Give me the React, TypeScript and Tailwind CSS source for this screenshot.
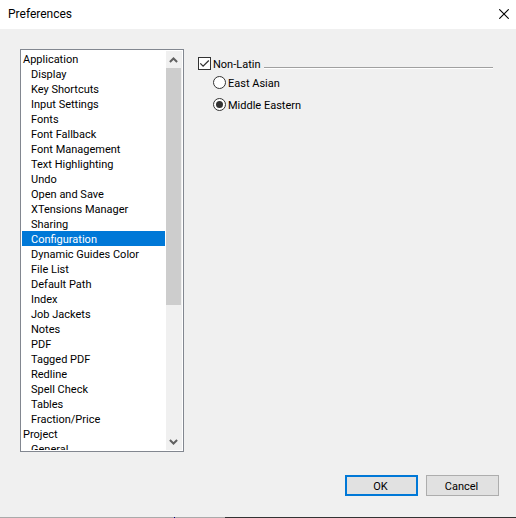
import { useState } from "react";
import clsx from "clsx";

interface Section {
  title: string;
  items: string[];
}

const SECTIONS: Section[] = [
  {
    title: "Application",
    items: [
      "Display",
      "Key Shortcuts",
      "Input Settings",
      "Fonts",
      "Font Fallback",
      "Font Management",
      "Text Highlighting",
      "Undo",
      "Open and Save",
      "XTensions Manager",
      "Sharing",
      "Configuration",
      "Dynamic Guides Color",
      "File List",
      "Default Path",
      "Index",
      "Job Jackets",
      "Notes",
      "PDF",
      "Tagged PDF",
      "Redline",
      "Spell Check",
      "Tables",
      "Fraction/Price",
    ],
  },
  { title: "Project", items: ["General"] },
];

function TitleBar() {
  return (
    <header className="flex h-[29px] items-center justify-between bg-white pr-[7px] pb-[2px] pl-2">
      <h1 className="text-[12px] leading-4 text-black">Preferences</h1>
      <button type="button" aria-label="Close">
        <svg width="10" height="10" viewBox="0 0 10 10" className="block">
          <path d="M0.3 0.3L9.7 9.7M9.7 0.3L0.3 9.7" stroke="#000" strokeWidth="1.1" />
        </svg>
      </button>
    </header>
  );
}

function ScrollArrow({ down }: { down?: boolean }) {
  return (
    <button
      type="button"
      aria-label={down ? "Scroll down" : "Scroll up"}
      className="flex h-[17px] w-full shrink-0 items-center justify-center pr-px"
    >
      <svg width="9" height="6" viewBox="0 0 9 6" className={clsx("block", down && "rotate-180")}>
        <path d="M0.9 5L4.5 1.5L8.1 5" fill="none" stroke="#606060" strokeWidth="2" />
      </svg>
    </button>
  );
}

function SectionList() {
  const [selected, setSelected] = useState("Configuration");

  return (
    <nav
      aria-label="Sections"
      className="flex h-[403px] w-[164px] shrink-0 border border-[#828790] bg-white p-px"
    >
      <div className="min-w-0 flex-1 overflow-hidden">
        {SECTIONS.map((section) => (
          <section key={section.title}>
            <h2 className="pt-[2px] pl-px leading-[13px]">{section.title}</h2>
            <ul>
              {section.items.map((item) => (
                <li key={item}>
                  <button
                    type="button"
                    onClick={() => setSelected(item)}
                    className={clsx(
                      "block w-full pt-[2px] pl-[9px] text-left leading-[13px] whitespace-nowrap",
                      item === selected && "bg-[#0078d7] text-white",
                    )}
                  >
                    {item}
                  </button>
                </li>
              ))}
            </ul>
          </section>
        ))}
      </div>
      <div className="ml-px flex w-4 shrink-0 flex-col bg-[#f0f0f0]">
        <ScrollArrow />
        <div className="flex-1 pr-px">
          <div className="h-[237px] bg-[#cdcdcd]" />
        </div>
        <ScrollArrow down />
      </div>
    </nav>
  );
}

interface ScriptRadioProps {
  label: string;
  checked: boolean;
  onSelect: () => void;
}

function ScriptRadio({ label, checked, onSelect }: ScriptRadioProps) {
  return (
    <label className="flex h-[15px] items-center gap-[2px]">
      <span className="grid size-[13px] place-items-center">
        <input
          type="radio"
          name="script"
          checked={checked}
          onChange={onSelect}
          className="col-start-1 row-start-1 size-[13px] appearance-none rounded-full border border-[#333] bg-white"
        />
        {checked && (
          <span className="pointer-events-none z-10 col-start-1 row-start-1 size-[7px] rounded-full bg-[#333]" />
        )}
      </span>
      <span className="pt-[2px] leading-[13px]">{label}</span>
    </label>
  );
}

function ConfigurationPanel() {
  const [nonLatin, setNonLatin] = useState(true);
  const [script, setScript] = useState("Middle Eastern");

  return (
    <main className="min-w-0 flex-1 pt-[7px]">
      <div className="flex items-start">
        <label className="flex h-[15px] items-center gap-[2px]">
          <span className="grid size-[13px] place-items-center">
            <input
              type="checkbox"
              checked={nonLatin}
              onChange={(e) => setNonLatin(e.target.checked)}
              className="col-start-1 row-start-1 size-[13px] appearance-none border border-[#333] bg-white"
            />
            {nonLatin && (
              <svg
                width="11"
                height="11"
                viewBox="0 0 11 11"
                className="pointer-events-none z-10 col-start-1 row-start-1"
              >
                <path d="M1.3 5.4L4.1 8.2L9.8 2.5" fill="none" stroke="#333" strokeWidth="1.3" />
              </svg>
            )}
          </span>
          <span className="pt-[2px] leading-[13px]">Non-Latin</span>
        </label>
        <div className="mt-[11px] ml-[3px] h-[2px] flex-1 border-t border-b border-t-[#a0a0a0] border-b-white" />
      </div>
      <div className="mt-1 flex flex-col gap-[7px] pl-[15px]">
        {["East Asian", "Middle Eastern"].map((name) => (
          <ScriptRadio
            key={name}
            label={name}
            checked={script === name}
            onSelect={() => setScript(name)}
          />
        ))}
      </div>
    </main>
  );
}

export default function App() {
  return (
    <div className="flex min-h-screen flex-col bg-[#f0f0f0] font-[Roboto,sans-serif] text-[11px] text-black">
      <TitleBar />
      <div className="flex gap-[14px] pt-5 pr-[23px] pl-5">
        <SectionList />
        <ConfigurationPanel />
      </div>
      <footer className="mt-[23px] flex justify-end gap-2 pr-[17px]">
        <button
          type="button"
          className="h-[21px] w-[73px] border-2 border-[#0078d7] bg-[#e1e1e1] pt-[2px] pr-[2px] leading-[15px]"
        >
          OK
        </button>
        <button
          type="button"
          className="h-[21px] w-[73px] border border-[#adadad] bg-[#e1e1e1] pt-[2px] pr-[2px] leading-[17px]"
        >
          Cancel
        </button>
      </footer>
      <div className="mt-auto flex h-px">
        <div className="w-[174px] bg-[#aaaaaa]" />
        <div className="w-px bg-[#000080]" />
        <div className="w-[50px] bg-[#aaaaaa]" />
        <div className="flex-1 bg-[#333]" />
      </div>
    </div>
  );
}
